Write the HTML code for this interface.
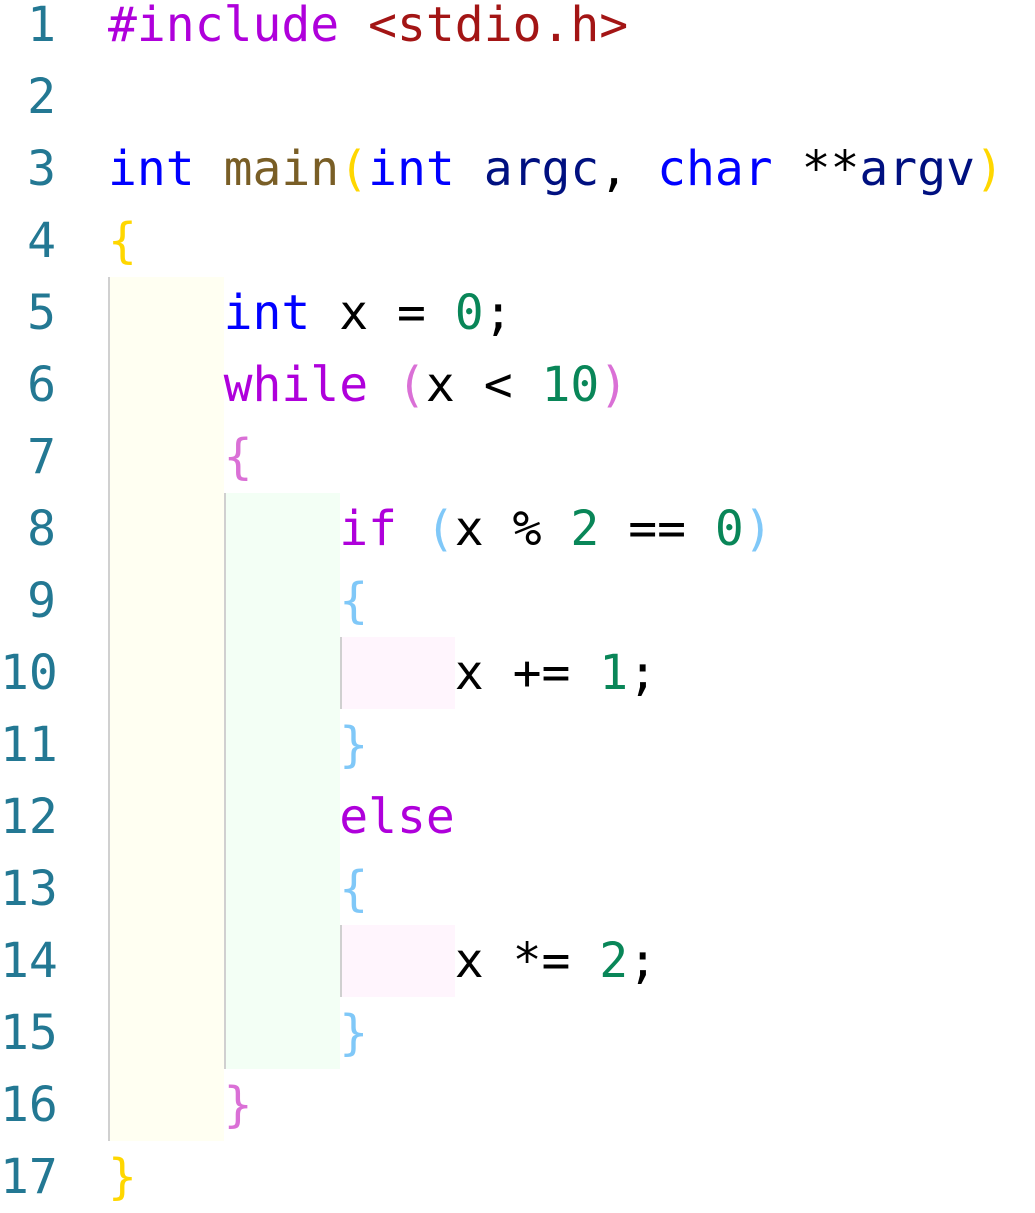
<!DOCTYPE html>
<html><head><meta charset="utf-8"><style>
html,body{margin:0;padding:0;background:#fff;width:1035px;height:1213px;overflow:hidden;position:relative}
.l{position:absolute;left:0;height:72px;line-height:72px;font-family:"DejaVu Sans Mono","Liberation Mono",monospace;font-size:48px;white-space:pre;color:#000}
.n{position:absolute;left:0;width:56px;text-align:right;color:#237893}
.c{position:absolute;left:108px}
.g{position:absolute;box-sizing:border-box;border-left:2px solid #d0d0d0}
.k{color:#af00db}.t{color:#0000ff}.s{color:#a31515}.f{color:#795e26}.v{color:#001080}.d{color:#098658}
.b1{color:#ffd700}.b2{color:#da70d6}.b3{color:#80c8f8}
</style></head><body>
<div class="g" style="left:108px;top:277px;width:116px;height:864px;background:#fffff2"></div>
<div class="g" style="left:224px;top:493px;width:116px;height:576px;background:#f3fff5"></div>
<div class="g" style="left:340px;top:637px;width:115px;height:72px;background:#fff5fd"></div>
<div class="g" style="left:340px;top:925px;width:115px;height:72px;background:#fff5fd"></div>

<div class="l" style="top:-11px"><span class="n">1</span><span class="c"><span class="k">#include</span> <span class="s">&lt;stdio.h&gt;</span></span></div>
<div class="l" style="top:61px"><span class="n">2</span></div>
<div class="l" style="top:133px"><span class="n">3</span><span class="c"><span class="t">int</span> <span class="f">main</span><span class="b1">(</span><span class="t">int</span> <span class="v">argc</span>, <span class="t">char</span> **<span class="v">argv</span><span class="b1">)</span></span></div>
<div class="l" style="top:205px"><span class="n">4</span><span class="c"><span class="b1">{</span></span></div>
<div class="l" style="top:277px"><span class="n">5</span><span class="c">    <span class="t">int</span> x = <span class="d">0</span>;</span></div>
<div class="l" style="top:349px"><span class="n">6</span><span class="c">    <span class="k">while</span> <span class="b2">(</span>x &lt; <span class="d">10</span><span class="b2">)</span></span></div>
<div class="l" style="top:421px"><span class="n">7</span><span class="c">    <span class="b2">{</span></span></div>
<div class="l" style="top:493px"><span class="n">8</span><span class="c">        <span class="k">if</span> <span class="b3">(</span>x % <span class="d">2</span> == <span class="d">0</span><span class="b3">)</span></span></div>
<div class="l" style="top:565px"><span class="n">9</span><span class="c">        <span class="b3">{</span></span></div>
<div class="l" style="top:637px"><span class="n">10</span><span class="c">            x += <span class="d">1</span>;</span></div>
<div class="l" style="top:709px"><span class="n">11</span><span class="c">        <span class="b3">}</span></span></div>
<div class="l" style="top:781px"><span class="n">12</span><span class="c">        <span class="k">else</span></span></div>
<div class="l" style="top:853px"><span class="n">13</span><span class="c">        <span class="b3">{</span></span></div>
<div class="l" style="top:925px"><span class="n">14</span><span class="c">            x *= <span class="d">2</span>;</span></div>
<div class="l" style="top:997px"><span class="n">15</span><span class="c">        <span class="b3">}</span></span></div>
<div class="l" style="top:1069px"><span class="n">16</span><span class="c">    <span class="b2">}</span></span></div>
<div class="l" style="top:1141px"><span class="n">17</span><span class="c"><span class="b1">}</span></span></div>
</body></html>
